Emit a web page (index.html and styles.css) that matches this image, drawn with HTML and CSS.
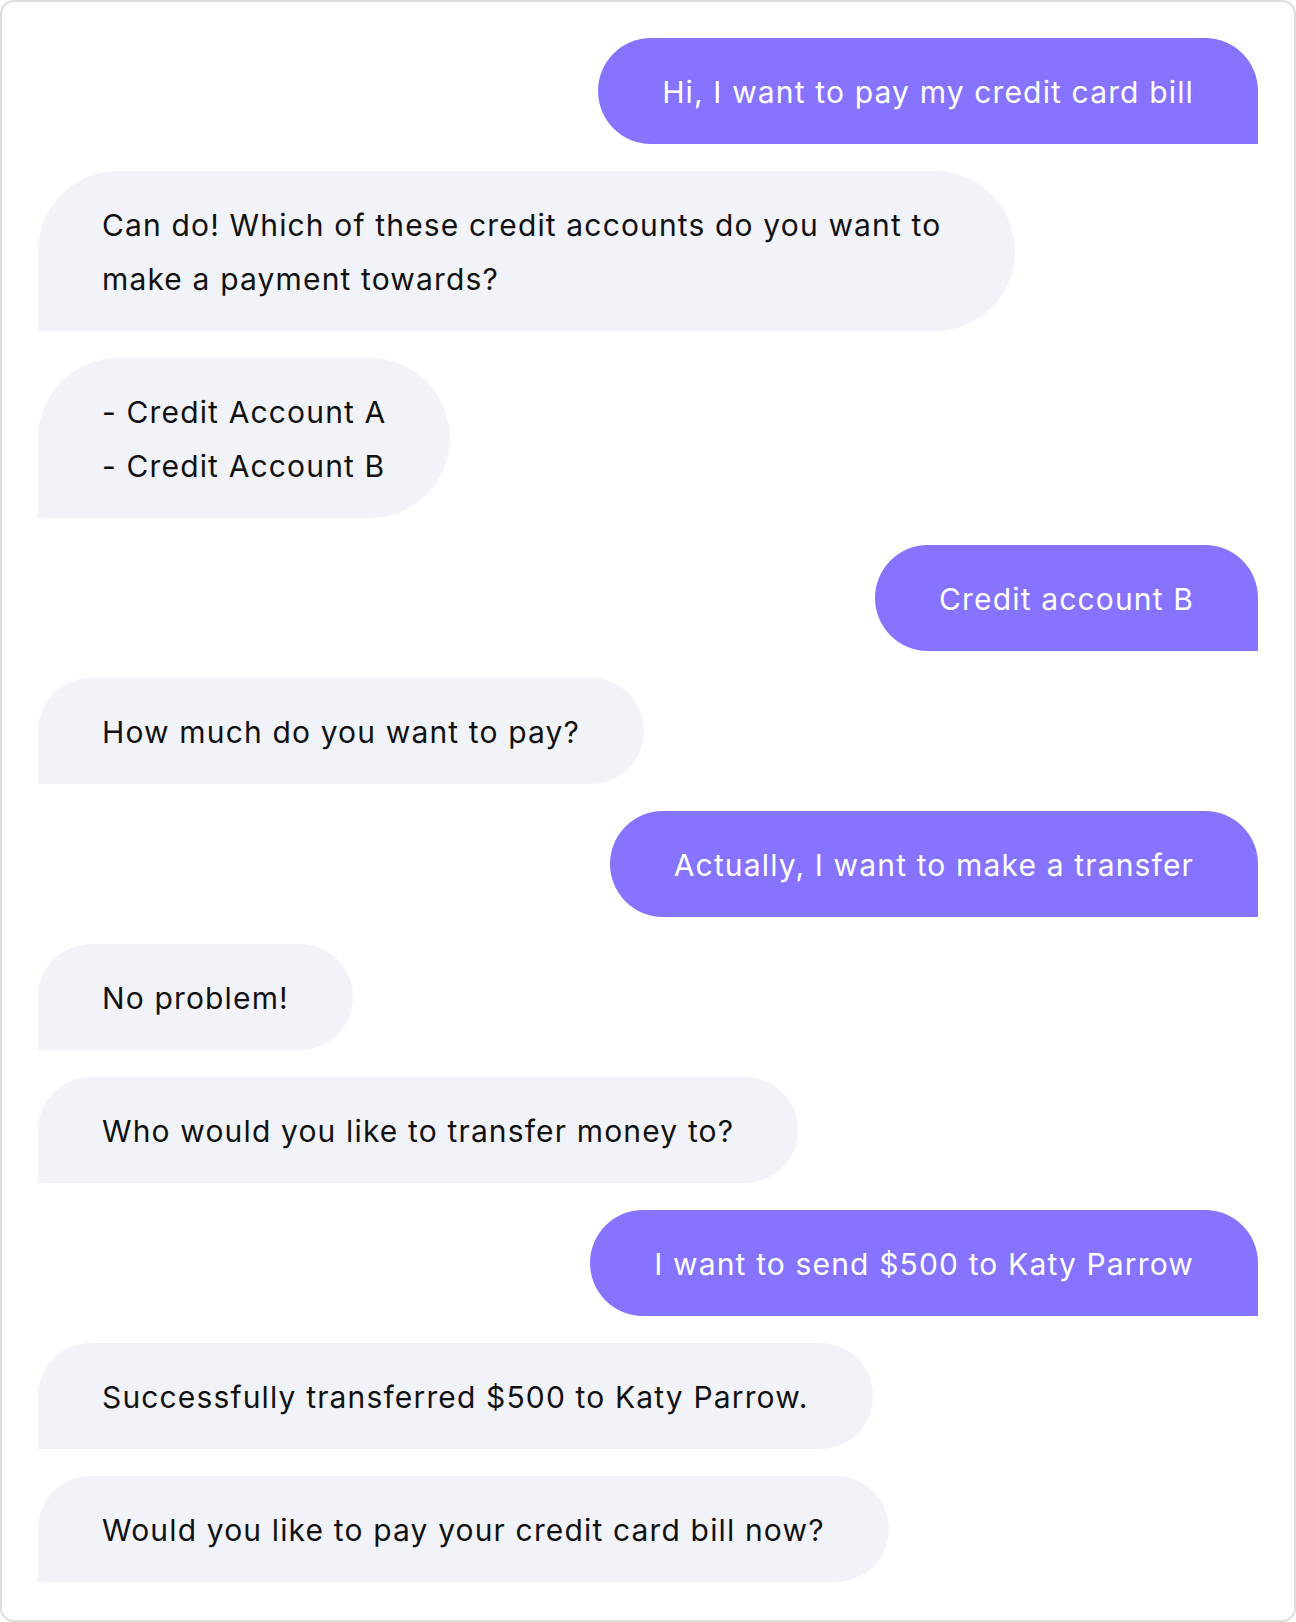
FILE: index.html
```html
<!DOCTYPE html>
<html lang="en">
<head>
    <meta charset="UTF-8">
    <meta name="viewport" content="width=device-width, initial-scale=1.0">
    <title>Chat</title>
    <link rel="stylesheet" href="styles.css">
</head>
<body>
    <div class="chat">
        <div class="msg sent">Hi, I want to pay my credit card bill</div>
        <div class="msg received long">Can do! Which of these credit accounts do you want to<br>make a payment towards?</div>
        <div class="msg received">- Credit Account A<br>- Credit Account B</div>
        <div class="msg sent">Credit account B</div>
        <div class="msg received">How much do you want to pay?</div>
        <div class="msg sent">Actually, I want to make a transfer</div>
        <div class="msg received">No problem!</div>
        <div class="msg received">Who would you like to transfer money to?</div>
        <div class="msg sent">I want to send $500 to Katy Parrow</div>
        <div class="msg received">Successfully transferred $500 to Katy Parrow.</div>
        <div class="msg received">Would you like to pay your credit card bill now?</div>
    </div>
</body>
</html>
```

FILE: styles.css
```css
* {
    box-sizing: border-box;
}

body {
    margin: 0;
    font-family: 'Inter', 'Liberation Sans', sans-serif;
    background: #ffffff;
}

.chat {
    width: 1296px;
    height: 1622px;
    border: 2px solid #dddddd;
    border-radius: 14px;
    padding: 36px;
    display: flex;
    flex-direction: column;
    gap: 27px;
}

.msg {
    font-size: 30px;
    line-height: 54px;
    letter-spacing: 1.15px;
    padding: 27px 64px 25px;
    white-space: nowrap;
}

.sent {
    align-self: flex-end;
    background: #8673ff;
    color: #ffffff;
    border-radius: 80px 80px 0 80px;
}

.received {
    align-self: flex-start;
    background: #f2f3f8;
    color: #111111;
    border-radius: 80px 80px 80px 0;
}

.long {
    padding-right: 74px;
}
```
